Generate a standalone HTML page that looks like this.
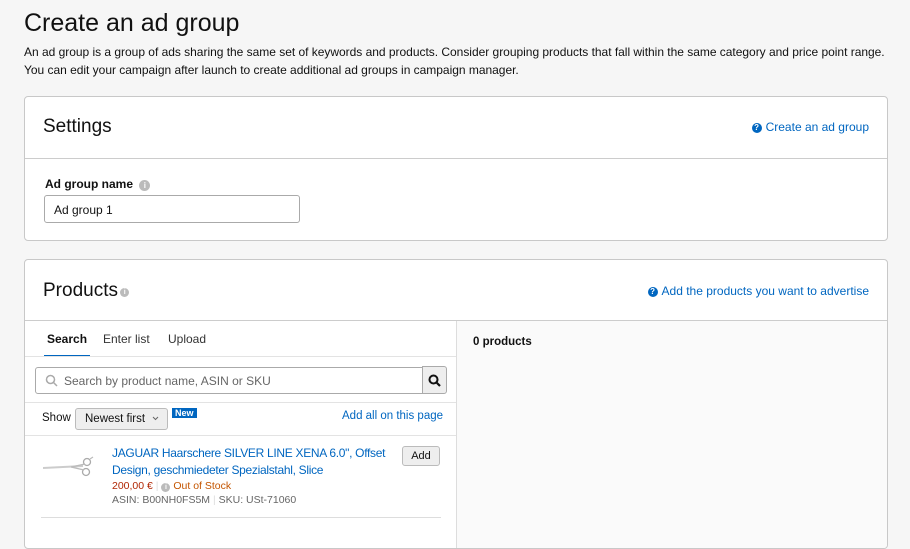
<!DOCTYPE html>
<html><head><style>
*{box-sizing:border-box;margin:0;padding:0}
body{width:910px;height:522px;overflow:hidden;background:#f6f6f6;font-family:"Liberation Sans",sans-serif;color:#111;position:relative;white-space:nowrap}
.a{position:absolute}
.card{position:absolute;left:24px;width:864px;background:#fff;border:1px solid #c8c8c8;border-radius:4px}
.link{color:#0066c0;font-size:12px}
.q{display:inline-block;width:10px;height:10px;border-radius:50%;background:#0066c0;color:#fff;font-size:8px;font-weight:bold;text-align:center;line-height:10px;vertical-align:1px;margin-right:4px}
.info{display:inline-block;width:11px;height:11px;border-radius:50%;background:#bbb;color:#fff;font-size:8px;font-weight:bold;text-align:center;line-height:11px}
</style></head><body>
<div class="a" style="left:24px;top:9px;font-size:25px;color:#111">Create an ad group</div>
<div class="a" style="left:24px;top:43px;font-size:12px;line-height:18px;color:#111;letter-spacing:-0.02px">An ad group is a group of ads sharing the same set of keywords and products. Consider grouping products that fall within the same category and price point range.<br>You can edit your campaign after launch to create additional ad groups in campaign manager.</div>

<div class="card" style="top:96px;height:145px">
  <div class="a" style="left:18px;top:19px;font-size:19px">Settings</div>
  <div class="a link" style="right:18px;top:23px"><span class="q">?</span>Create an ad group</div>
  <div class="a" style="left:0;right:0;top:61px;border-top:1px solid #ccc"></div>
  <div class="a" style="left:20px;top:80px;font-size:12px;font-weight:bold">Ad group name <span class="info" style="margin-left:3px">i</span></div>
  <div class="a" style="left:19px;top:98px;width:256px;height:28px;border:1px solid #aaa;border-radius:3px;font-size:12px;padding:7px 9px">Ad group 1</div>
</div>

<div class="card" style="top:259px;height:290px;overflow:hidden">
  <div class="a" style="left:18px;top:20px;font-size:19px">Products <span class="info" style="width:9px;height:9px;line-height:9px;font-size:7px;vertical-align:2px;margin-left:-3px">i</span></div>
  <div class="a link" style="right:18px;top:24px"><span class="q">?</span>Add the products you want to advertise</div>
  <div class="a" style="left:0;right:0;top:60px;border-top:1px solid #ccc"></div>
  <div class="a" style="left:431px;right:0;top:61px;bottom:0;background:#fafafa;border-left:1px solid #ddd"></div>
  <div class="a" style="left:448px;top:76px;font-size:11.5px;font-weight:bold">0 products</div>
  <div class="a" style="left:22px;top:72px;font-size:12px;font-weight:bold">Search</div>
  <div class="a" style="left:19px;top:95px;width:46px;border-top:2px solid #0066c0"></div>
  <div class="a" style="left:78px;top:72px;font-size:12px;color:#333">Enter list</div>
  <div class="a" style="left:143px;top:72px;font-size:12px;color:#333">Upload</div>
  <div class="a" style="left:0;width:431px;top:96px;border-top:1px solid #e3e3e3"></div>
  <div class="a" style="left:10px;top:107px;width:388px;height:27px;border:1px solid #aaa;border-radius:3px 0 0 3px;font-size:12px;color:#666;padding:6px 0 0 28px">Search by product name, ASIN or SKU
    <svg class="a" style="left:9px;top:6px" width="13" height="13" viewBox="0 0 13 13"><circle cx="5.5" cy="5.5" r="4" fill="none" stroke="#aaa" stroke-width="1.5"/><path d="M8.5 8.5l3.5 3.5" stroke="#aaa" stroke-width="1.5"/></svg></div>
  <div class="a" style="left:397px;top:106px;width:25px;height:28px;border:1px solid #aaa;border-radius:0 3px 3px 0;background:#eee">
    <svg class="a" style="left:5px;top:7px" width="13" height="13" viewBox="0 0 13 13"><circle cx="5.5" cy="5.5" r="4" fill="none" stroke="#111" stroke-width="2"/><path d="M8.5 8.5l3.5 3.5" stroke="#111" stroke-width="2.2"/></svg></div>
  <div class="a" style="left:0;width:431px;top:142px;border-top:1px solid #e3e3e3"></div>
  <div class="a" style="left:17px;top:152px;font-size:11.5px">Show</div>
  <div class="a" style="left:50px;top:148px;width:93px;height:22px;border:1px solid #bbb;border-radius:3px;background:#eee;font-size:11.5px;padding:4px 0 0 9px">Newest first<svg style="margin-left:7px;vertical-align:1px" width="7" height="5" viewBox="0 0 7 5"><path d="M1 1l2.5 2.5L6 1" fill="none" stroke="#666" stroke-width="1"/></svg></div>
  <div class="a" style="left:147px;top:148px;background:#0066c0;color:#fff;font-size:9px;font-weight:bold;padding:0 3px;line-height:10px">New</div>
  <div class="a link" style="left:317px;top:150px;font-size:11.5px">Add all on this page</div>
  <div class="a" style="left:0;width:431px;top:175px;border-top:1px solid #e3e3e3"></div>
  <svg class="a" style="left:18px;top:195px" width="52" height="24" viewBox="0 0 52 24"><path d="M0 13 L40 11" stroke="#ccc" stroke-width="2"/><circle cx="44" cy="7" r="3.5" fill="none" stroke="#aaa" stroke-width="1.3"/><circle cx="43" cy="17" r="3.5" fill="none" stroke="#aaa" stroke-width="1.3"/><path d="M28 12 L42 9 M28 12 L41 15 M47 4l3-2" stroke="#bbb" stroke-width="1.2"/></svg>
  <div class="a link" style="left:87px;top:185px;line-height:17px;font-size:12px;letter-spacing:-0.3px">JAGUAR Haarschere SILVER LINE XENA 6.0", Offset<br>Design, geschmiedeter Spezialstahl, Slice</div>
  <div class="a" style="left:87px;top:220px;font-size:10.5px;color:#b12704">200,00 € <span style="color:#ddd">|</span> <span class="info" style="width:9px;height:9px;line-height:9px;font-size:7px">i</span> <span style="color:#c45500">Out of Stock</span></div>
  <div class="a" style="left:87px;top:234px;font-size:10.5px;color:#666">ASIN: B00NH0FS5M <span style="color:#ddd">|</span> SKU: USt-71060</div>
  <div class="a" style="left:377px;top:186px;width:38px;height:20px;border:1px solid #bbb;border-radius:3px;background:#eee;font-size:11px;text-align:center;line-height:18px">Add</div>
  <div class="a" style="left:16px;width:400px;top:257px;border-top:1px solid #ddd"></div>
</div>
</body></html>
